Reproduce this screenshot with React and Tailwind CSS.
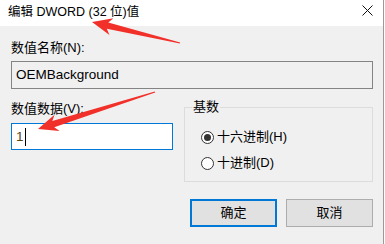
import React from 'react';

const font = { fontFamily: '"Liberation Sans", "Noto Sans CJK SC", sans-serif' };

function Arrow({ tip, tail, head = 20, half = 8.5, neck = 3.2, end = 0.6 }) {
  const dx = tail[0] - tip[0];
  const dy = tail[1] - tip[1];
  const len = Math.hypot(dx, dy);
  const ux = dx / len;
  const uy = dy / len;
  const nx = -uy;
  const ny = ux;
  const b = [tip[0] + ux * head, tip[1] + uy * head];
  const c = [tip[0] + ux * (head - 4), tip[1] + uy * (head - 4)];
  const pts = [
    tip,
    [b[0] + nx * half, b[1] + ny * half],
    [c[0] + nx * neck, c[1] + ny * neck],
    [tail[0] + nx * end, tail[1] + ny * end],
    [tail[0] - nx * end, tail[1] - ny * end],
    [c[0] - nx * neck, c[1] - ny * neck],
    [b[0] - nx * half, b[1] - ny * half],
  ];
  return <polygon points={pts.map(p => p.join(',')).join(' ')} fill="#f2302a" />;
}

export default function App() {
  return (
    <div className="relative w-[385px] h-[244px] bg-white flex overflow-hidden" style={font}>
      <div className="w-[384px] h-full bg-[#f0f0f0] border-r border-[#9a9a9a] flex flex-col">
        {/* title bar */}
        <div className="h-[26px] bg-white flex items-start justify-between pl-[8px] pr-[10px]">
          <span className="text-[12.5px] leading-[16px] mt-[4px] text-black">编辑 DWORD (32 位)值</span>
          <svg width="11" height="11" viewBox="0 0 11 11" className="mt-[5px]">
            <path d="M0.5 0.5 L10.5 10.5 M10.5 0.5 L0.5 10.5" stroke="#111" strokeWidth="1" />
          </svg>
        </div>

        <div className="flex flex-col pl-[11px] pr-[10px] text-[13px] leading-[16px] text-black">
          <div className="mt-[14px]">数值名称(N):</div>
          <div className="mt-[5px] h-[28px] border border-[#848484] bg-[#f0f0f0] flex items-center pl-[4px] text-[13.5px]">
            OEMBackground
          </div>

          <div className="flex gap-[11px]">
            <div className="w-[162px] flex flex-col">
              <div className="mt-[12px]">数值数据(V):</div>
              <div className="mt-[6px] h-[27px] border border-[#0078d7] bg-white flex items-center pl-[4px]">
                <span className="text-[#5c4316] text-[13.5px]">1</span>
                <span className="w-[1px] h-[18px] bg-black ml-[1px]"></span>
              </div>
            </div>

            <fieldset className="mt-[10px] w-[189px] h-[83px] border border-[#dcdcdc]">
              <legend className="ml-[7px] px-[1px]">基数</legend>
              <div className="flex flex-col pl-[16px] mt-[14px] gap-[10px]">
                <div className="flex items-center gap-[3px]">
                  <span className="w-[13px] h-[13px] rounded-full border border-[#333] bg-white flex items-center justify-center">
                    <span className="w-[7px] h-[7px] rounded-full bg-[#333]"></span>
                  </span>
                  <span>十六进制(H)</span>
                </div>
                <div className="flex items-center gap-[3px]">
                  <span className="w-[13px] h-[13px] rounded-full border border-[#333] bg-white"></span>
                  <span>十进制(D)</span>
                </div>
              </div>
            </fieldset>
          </div>

          <div className="mt-[17px] flex justify-end gap-[9px]">
            <button className="w-[87px] h-[28px] border-2 border-[#0078d7] bg-[#e1e1e1] text-[13px]">确定</button>
            <button className="w-[87px] h-[28px] border border-[#adadad] bg-[#e1e1e1] text-[13px]">取消</button>
          </div>
        </div>
      </div>

      <svg className="absolute left-0 top-0 pointer-events-none" width="385" height="244">
        <Arrow tip={[92, 22]} tail={[180, 43]} />
        <Arrow tip={[38, 129]} tail={[155, 92]} />
      </svg>
    </div>
  );
}
